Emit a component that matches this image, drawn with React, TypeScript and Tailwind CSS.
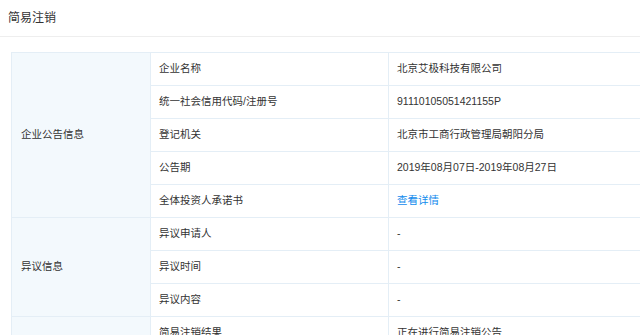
const rows: { group?: string; span?: number; label: string; value: string; link?: boolean }[] = [
  { group: "企业公告信息", span: 5, label: "企业名称", value: "北京艾极科技有限公司" },
  { label: "统一社会信用代码/注册号", value: "91110105051421155P" },
  { label: "登记机关", value: "北京市工商行政管理局朝阳分局" },
  { label: "公告期", value: "2019年08月07日-2019年08月27日" },
  { label: "全体投资人承诺书", value: "查看详情", link: true },
  { group: "异议信息", span: 3, label: "异议申请人", value: "-" },
  { label: "异议时间", value: "-" },
  { label: "异议内容", value: "-" },
  { group: "", span: 1, label: "简易注销结果", value: "正在进行简易注销公告" },
];

const App = () => {
  return (
    <div className="w-[640px] h-[335px] overflow-hidden bg-white text-[#333] font-['Liberation_Sans','Noto_Sans_CJK_SC',sans-serif]">
      <div className="h-[37px] border-b border-[#eeeeee] px-[8px] flex items-center text-[12px]">简易注销</div>

      <div className="pl-[11px] pt-[15px]">
        <table className="w-[680px] border-collapse text-[10.5px] table-fixed">
          <colgroup>
            <col className="w-[139px]" />
            <col className="w-[238px]" />
            <col />
          </colgroup>
          <tbody>
            {rows.map((r, i) => (
              <tr key={i} className="h-[33px]">
                {r.group !== undefined && (
                  <td rowSpan={r.span} className="bg-[#f3f9fd] border border-[#e4eef6] pl-[9px] align-middle">
                    {r.group}
                  </td>
                )}
                <td className="border border-[#e4eef6] pl-[8px]">{r.label}</td>
                <td className="border border-[#e4eef6] pl-[8px]">
                  {r.link ? <span className="text-[#128bed]">{r.value}</span> : r.value}
                </td>
              </tr>
            ))}
          </tbody>
        </table>
      </div>
    </div>
  );
};

export default App;
